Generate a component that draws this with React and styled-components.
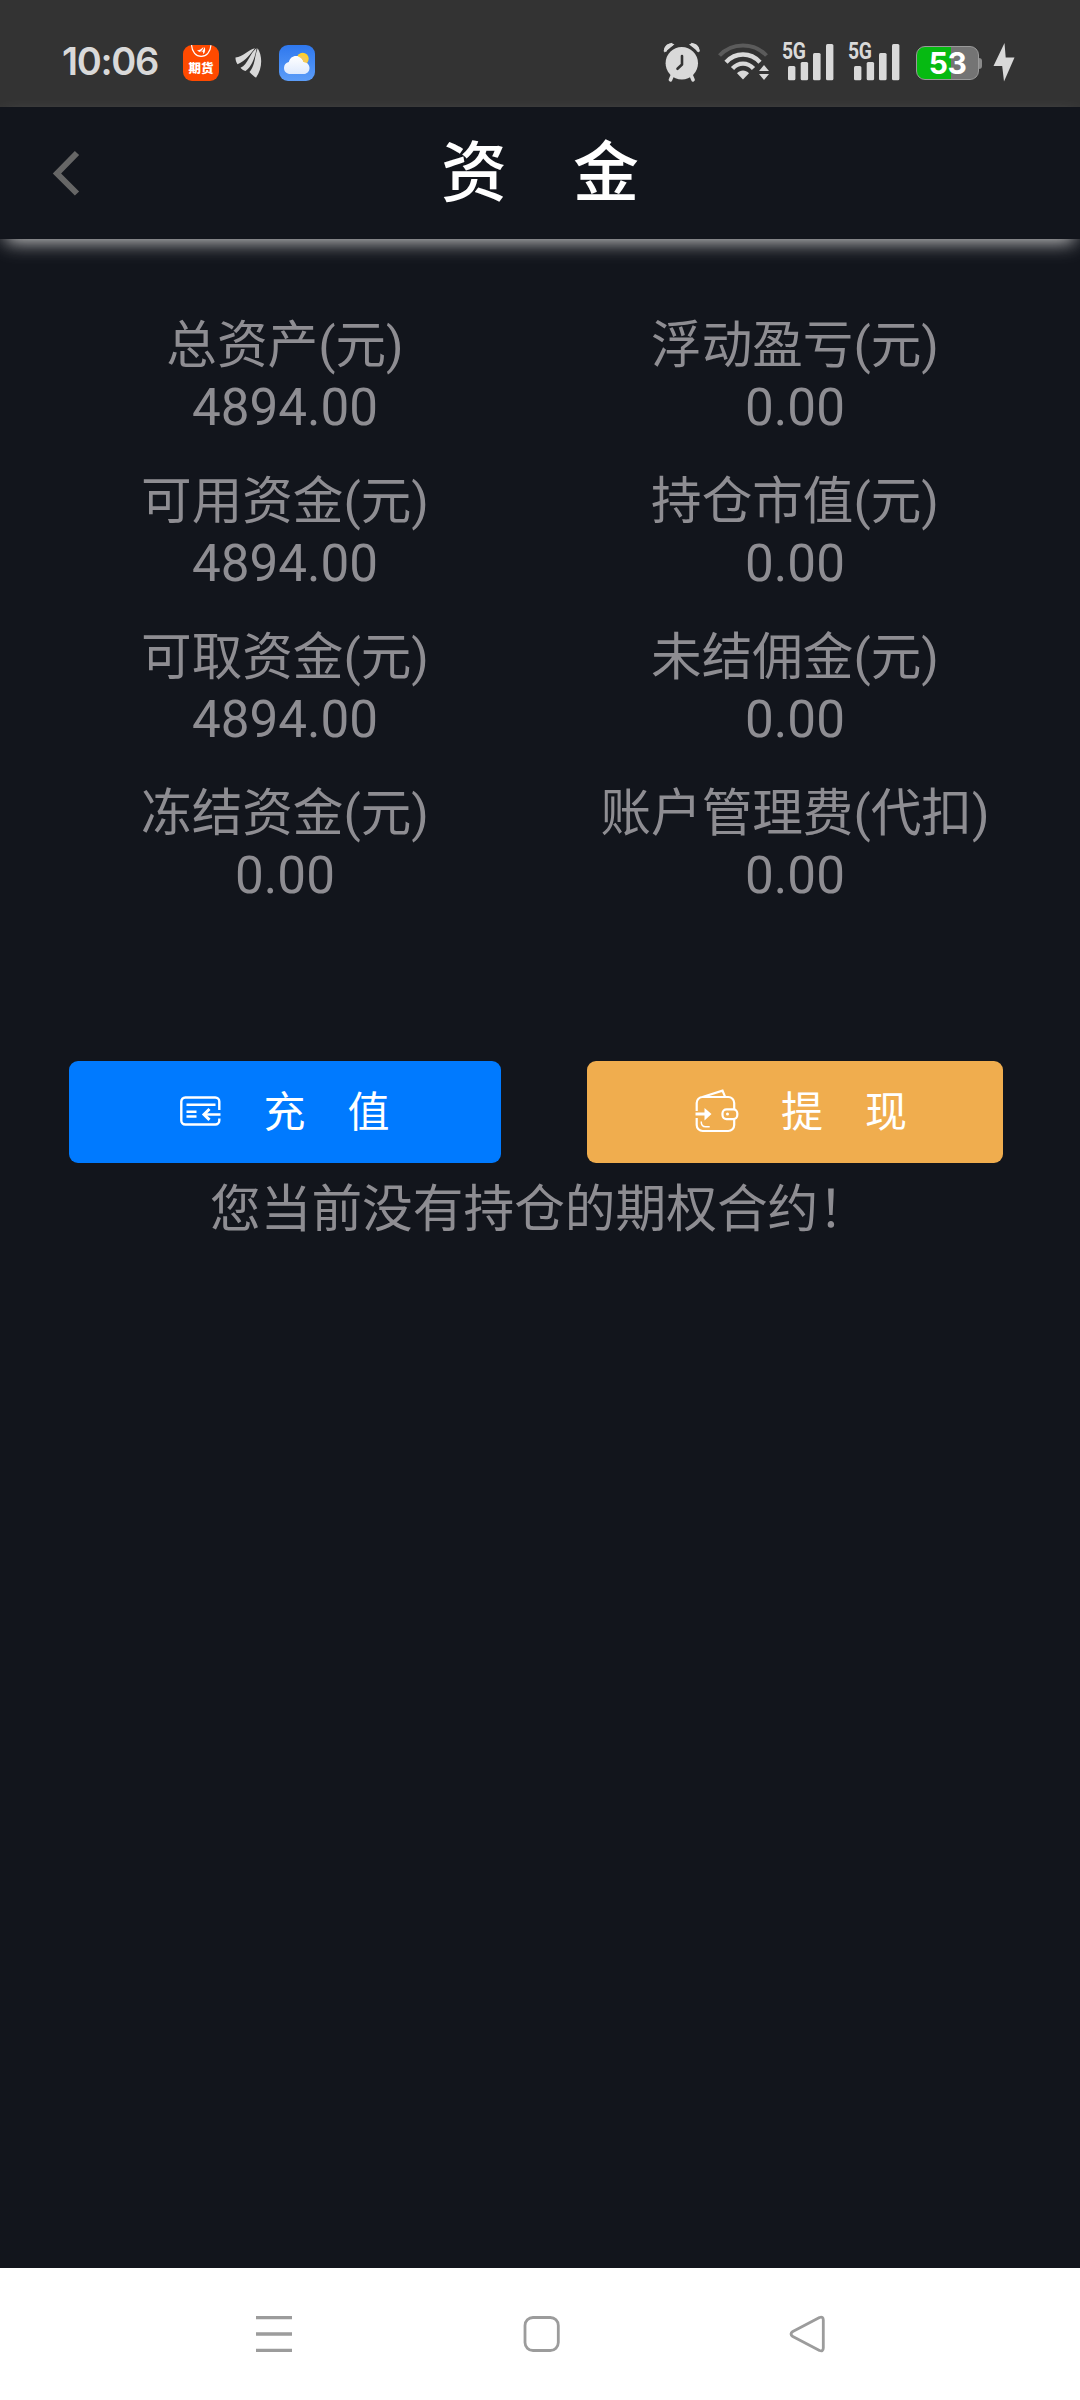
import React from "react";
import styled, { createGlobalStyle } from "styled-components";

const Global = createGlobalStyle`
  * { box-sizing: border-box; }
  html, body { margin: 0; padding: 0; background: #12151c; }
  svg { display: block; flex: none; }
`;

const Screen = styled.div`
  width: 1080px;
  height: 2400px;
  display: flex;
  flex-direction: column;
  overflow: hidden;
  background: #12151c;
  color: #8e8d92;
  font-family: Roboto, "Noto Sans CJK SC", sans-serif;
`;

const StatusBar = styled.div`
  height: 107px;
  flex: none;
  display: flex;
  justify-content: space-between;
  padding: 36px 65px 0 62px;
  background: #333333;
  color: #d9d9d9;
`;

const StatusSide = styled.div`
  display: flex;
  align-items: flex-start;
`;

const Clock = styled.time`
  width: 121px;
  padding-top: 6px;
  font: 600 38px/38px Inter, sans-serif;
  letter-spacing: -1.3px;
  white-space: nowrap;
`;

const AppBadge = styled.div`
  width: 36px;
  height: 36px;
  margin-top: 9px;
  border-radius: 9px;
  overflow: hidden;
  display: flex;
  flex-direction: column;
  align-items: center;
  background: ${(p) => p.$bg};
`;

const BadgeText = styled.span`
  margin-top: 3px;
  font: 900 12.5px/13px "Noto Sans CJK SC", sans-serif;
  color: #fff;
  white-space: nowrap;
`;

const IconSlot = styled.div`
  margin: ${(p) => p.$top || 0}px 0 0 ${(p) => p.$left || 0}px;
`;

const Signal = styled.div`
  width: 52px;
  height: 38px;
  margin: 7px 0 0 ${(p) => p.$left}px;
  display: grid;
  > * { grid-area: 1 / 1; }
`;

const Network = styled.span`
  font: 700 23px/18px Roboto, sans-serif;
  letter-spacing: -0.3px;
  color: #d9d9d9;
  transform: scaleX(0.84);
  transform-origin: 0 0;
`;

const Battery = styled.div`
  width: 63px;
  height: 34px;
  margin: 10px 0 0 16px;
  border-radius: 9px;
  border: 1px solid #9a9a9a;
  background: linear-gradient(90deg, #06ba12 0 34px, #747474 34px);
  color: #fff;
  text-align: center;
  font: 700 30px/32px Inter, sans-serif;
  letter-spacing: -0.6px;
`;

const BatteryTip = styled.div`
  width: 3px;
  height: 11px;
  margin-top: 22px;
  border-radius: 0 3px 3px 0;
  background: #8a8a8a;
`;

const Header = styled.header`
  height: 132px;
  flex: none;
  display: grid;
  grid-template-columns: 130px 1fr 130px;
  align-items: center;
  background: #12151c;
  box-shadow: 0 9px 18px -6px #ccc;
`;

const BackButton = styled.button`
  padding: 0 0 0 52px;
  border: 0;
  background: none;
`;

const Title = styled.h1`
  margin: 0;
  padding-top: 2px;
  text-align: center;
  color: #fff;
  font-weight: 500;
  font-size: 66px;
  line-height: 130px;
`;

const Summary = styled.section`
  margin-top: 76px;
  padding: 0 30px;
  display: grid;
  grid-template-columns: 1fr 1fr;
  row-gap: 32px;
`;

const Metric = styled.div`
  display: flex;
  flex-direction: column;
  align-items: center;
  font-size: 50.6px;
  line-height: 62px;
  white-space: nowrap;
`;

const Amount = styled.span`
  font-size: 51.2px;
  line-height: 61px;
  margin-bottom: 1px;
`;

const Actions = styled.div`
  display: flex;
  gap: 86px;
  margin-top: 154px;
  padding: 0 77px 0 69px;
`;

const Action = styled.button`
  flex: none;
  width: ${(p) => p.$width}px;
  height: 102px;
  padding: 0;
  border: 0;
  border-radius: 9px;
  display: flex;
  align-items: center;
  justify-content: center;
  gap: 42px;
  background: ${(p) => p.$color};
  color: #fff;

  svg { margin-bottom: 2px; }
`;

const ActionText = styled.span`
  padding-bottom: 6px;
  font: 400 42px/60px "Noto Sans CJK SC", sans-serif;
`;

const Message = styled.p`
  margin: 16px 0 0;
  padding-right: 1px;
  text-align: center;
  font-size: 50.7px;
  line-height: 62px;
`;

const NavBar = styled.nav`
  height: 132px;
  margin-top: auto;
  flex: none;
  display: flex;
  justify-content: space-between;
  padding: 46px 253px 0 255px;
  background: #fff;
`;

const metrics = [
  ["总资产(元)", "4894.00"],
  ["浮动盈亏(元)", "0.00"],
  ["可用资金(元)", "4894.00"],
  ["持仓市值(元)", "0.00"],
  ["可取资金(元)", "4894.00"],
  ["未结佣金(元)", "0.00"],
  ["冻结资金(元)", "0.00"],
  ["账户管理费(代扣)", "0.00"],
];

const FuturesMark = () => (
  <svg width="36" height="13" viewBox="0 0 36 13" fill="none">
    <path d="M8.500 0c.5 7 4.500 11.300 9.700 11.300S27.500 7 28 0" stroke="#fff" strokeWidth="1.200" />
    <path d="M14 5.500C17 5 19 3.500 20.500 2c-.500 2.500-2 4-4 5zM17.500 7.500C20 6 21 4 21.300 2c1.500 2.500 1 5-.8 7.200L19.800 6.500z" fill="#fff" />
  </svg>
);

const LeafMark = () => (
  <svg width="28" height="32" viewBox="0 0 28 32" fill="#d9d9d9">
    <path d="M.5 10.500C8 10 13 2.500 20 1.200 16 6 11 13.800 2.500 17.300 1 15 .4 12.500.5 10.500z" />
    <path d="M5.500 20.800C13.500 17 15 5.500 21.600 1.300 20.500 8 17.500 19 10.500 24 8.500 23.500 6.500 22.300 5.500 20.800z" />
    <path d="M14.500 25C20.500 18 19.500 8.500 22.700 1.300c5 8 4.800 20-1.700 29.500-1.700-1.200-4.500-3.500-6.500-5.800z" />
  </svg>
);

const WeatherMark = () => (
  <svg width="36" height="36" viewBox="0 0 36 36">
    <defs>
      <linearGradient id="cloud" x1="0" y1="0" x2="0" y2="1">
        <stop offset="0" stopColor="#fff" />
        <stop offset="1" stopColor="#dfeafd" />
      </linearGradient>
    </defs>
    <circle cx="23.700" cy="13.800" r="6" fill="#ffcf2e" />
    <path d="M11.500 29C7.500 29 5 26.500 5 23c0-3.200 2-5.500 4.800-6 1-3.800 3.700-6 7.200-6 4 0 6.700 2.500 7.500 6 3.600.2 6 2.700 6 5.900 0 3.600-2.600 6.100-6.500 6.100z" fill="url(#cloud)" />
    <path d="M19 11.500c3.200 1 4.800 3 5.500 5.500 1.500.1 2.600.5 3.500 1.200A6 6 0 0 0 19 11.500z" fill="#f4c95a" />
  </svg>
);

const AlarmIcon = () => (
  <svg width="38" height="40" viewBox="0 0 38 40" fill="none">
    <path d="M2 9.500C2.800 6 5.500 3.200 9.500 2.300M35.500 9.500C34.700 6 32 3.200 28 2.300" stroke="#d9d9d9" strokeWidth="3" />
    <path d="M1.500 10.500C-.3 4.500 5 -.5 11.500 2.200zM36 10.500C37.800 4.500 32.500 -.5 26 2.200z" fill="#d9d9d9" />
    <path d="M9.500 33l-2 4.800M28 33l2 4.800" stroke="#d9d9d9" strokeWidth="3.600" strokeLinecap="round" />
    <circle cx="18.800" cy="21.300" r="16.200" fill="#d9d9d9" />
    <path d="M19 14v8.500l-4.500 4.300" stroke="#333" strokeWidth="2.600" strokeLinecap="round" strokeLinejoin="round" />
  </svg>
);

const WifiIcon = () => (
  <svg width="52" height="38" viewBox="0 0 52 38" fill="none">
    <path d="M1.500 12.500C14-1 36-1 48.500 12.500" stroke="#5b5b5b" strokeWidth="4" />
    <path d="M8 19.200C17.500 9 32.500 9 42 19.200" stroke="#d9d9d9" strokeWidth="4.400" />
    <path d="M14.500 25.500C20.500 19 29.500 19 35.500 25.500" stroke="#d9d9d9" strokeWidth="4.400" />
    <path d="M19 30.300c3.500-3.600 8.500-3.600 12 0L25 36.500z" fill="#d9d9d9" />
    <path d="M46 22l5 6H41zM46 37l5-6H41z" fill="#d9d9d9" />
  </svg>
);

const Bars = () => (
  <svg width="52" height="38" viewBox="0 0 52 38" fill="#d9d9d9">
    <rect x="6" y="23" width="7.400" height="14.200" rx="1.500" />
    <rect x="18.700" y="19" width="7.400" height="18.200" rx="1.500" />
    <rect x="31" y="10" width="7.600" height="27.200" rx="1.500" />
    <rect x="44" y="1" width="7.400" height="36.200" rx="1.500" />
  </svg>
);

const BoltIcon = () => (
  <svg width="22" height="40" viewBox="0 0 22 40" fill="#d9d9d9">
    <path d="M11.500 1L.5 24h8.700L11 39.500 21.500 15.500h-8.800z" />
  </svg>
);

const CardIcon = () => (
  <svg width="41" height="30" viewBox="0 0 41 30" fill="none" stroke="#fff" strokeWidth="2.400">
    <path d="M39.300 14V5.500a4 4 0 0 0-4-4h-30a4 4 0 0 0-4 4v19a4 4 0 0 0 4 4h30a4 4 0 0 0 4-4V22.500" />
    <path d="M6.500 8.800h29M6.500 15.800h10M6.500 20.500h10M40.500 18.500H25" />
    <path d="M29.500 13L24 18.500l5.500 5.300" strokeWidth="3" />
  </svg>
);

const WalletIcon = () => (
  <svg width="56" height="44" viewBox="0 0 56 44" fill="none" stroke="#fff" strokeWidth="2.200">
    <path d="M13.700 22V14a6 6 0 0 1 6-6h25.500a6 6 0 0 1 6 6v6.300M51.200 30.500V36a6 6 0 0 1-6 6H19.700a6 6 0 0 1-6-6v-7" />
    <path d="M19.500 8L39.500 1.700l2.500 6" />
    <rect x="39.500" y="20.300" width="14.800" height="9.800" rx="4" />
    <circle cx="44.500" cy="25" r="1.500" fill="#fff" stroke="none" />
    <path d="M12.500 25h12" strokeWidth="3" />
    <path d="M21.500 19l7 6-7 6.500z" fill="#fff" stroke="none" />
    <path d="M18.200 32.500c0 3.500 1.500 5.300 4.500 5.300h4" strokeWidth="1.500" />
  </svg>
);

export default function App() {
  return (
    <>
      <Global />
      <Screen>
        <StatusBar>
          <StatusSide>
            <Clock>10:06</Clock>
            <AppBadge $bg="#ff4a00">
              <FuturesMark />
              <BadgeText>期货</BadgeText>
            </AppBadge>
            <IconSlot $left={16} $top={11}><LeafMark /></IconSlot>
            <IconSlot $left={16}>
              <AppBadge $bg="linear-gradient(#2f78ee, #5c9df8)"><WeatherMark /></AppBadge>
            </IconSlot>
          </StatusSide>
          <StatusSide>
            <IconSlot $top={6}><AlarmIcon /></IconSlot>
            <IconSlot $left={17} $top={7}><WifiIcon /></IconSlot>
            <Signal $left={12}><Network>5G</Network><Bars /></Signal>
            <Signal $left={14}><Network>5G</Network><Bars /></Signal>
            <Battery>53</Battery>
            <BatteryTip />
            <IconSlot $left={11} $top={6}><BoltIcon /></IconSlot>
          </StatusSide>
        </StatusBar>

        <Header>
          <BackButton aria-label="返回">
            <svg width="28" height="46" viewBox="0 0 28 46" fill="none">
              <path d="M25 3L5 23.500 25 43.500" stroke="#666" strokeWidth="6" />
            </svg>
          </BackButton>
          <Title>资　金</Title>
        </Header>

        <Summary>
          {metrics.map(([label, value]) => (
            <Metric key={label}>
              <span>{label}</span>
              <Amount>{value}</Amount>
            </Metric>
          ))}
        </Summary>

        <Actions>
          <Action $width={432} $color="#007aff"><CardIcon /><ActionText>充　值</ActionText></Action>
          <Action $width={416} $color="#f0ad4e"><WalletIcon /><ActionText>提　现</ActionText></Action>
        </Actions>
        <Message>您当前没有持仓的期权合约！</Message>

        <NavBar>
          <svg width="38" height="40" viewBox="0 0 38 40" stroke="#9c9c9c" strokeWidth="3.300">
            <path d="M1 3.700h36M1 20h36M1 36.300h36" />
          </svg>
          <svg width="38" height="40" viewBox="0 0 38 40" fill="none" stroke="#9c9c9c" strokeWidth="2.800">
            <rect x="3" y="3.500" width="33.300" height="33" rx="8" />
          </svg>
          <svg width="38" height="40" viewBox="0 0 38 40" fill="none" stroke="#9c9c9c" strokeWidth="2.800" strokeLinejoin="round">
            <path d="M30.500 3.500L3.800 17.500q-3.600 2.500 0 5L30.500 36.500q3.800 1.200 3.800-2.500V6q0-3.700-3.800-2.500z" />
          </svg>
        </NavBar>
      </Screen>
    </>
  );
}
